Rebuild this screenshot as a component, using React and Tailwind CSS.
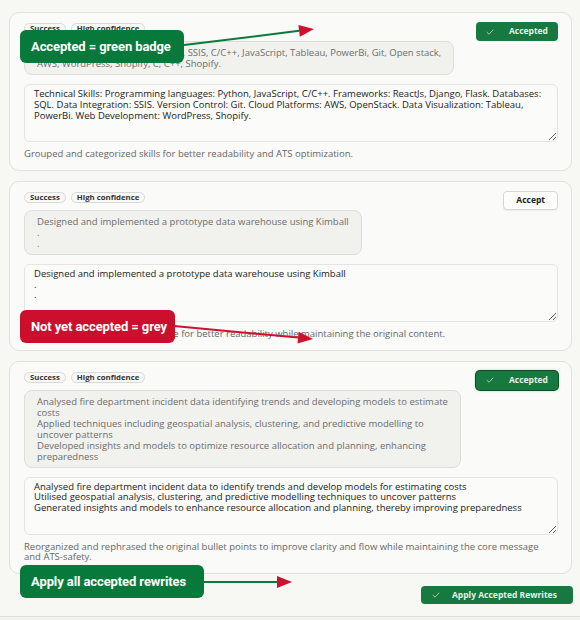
import React from 'react';

const rewrites = [
  {
    id: 'skills',
    accepted: true,
    original:
      'Python, SQL, MySQL, PostgreSQL, SSIS, C/C++, JavaScript, Tableau, PowerBi, Git, Open stack,\nAWS, WordPress, Shopify, C, C++, Shopify.',
    rewritten:
      'Technical Skills: Programming languages: Python, JavaScript, C/C++. Frameworks: ReactJs, Django, Flask. Databases:\nSQL. Data Integration: SSIS. Version Control: Git. Cloud Platforms: AWS, OpenStack. Data Visualization: Tableau,\nPowerBi. Web Development: WordPress, Shopify.',
    note: 'Grouped and categorized skills for better readability and ATS optimization.',
  },
  {
    id: 'warehouse',
    accepted: false,
    original: 'Designed and implemented a prototype data warehouse using Kimball\n.\n.',
    rewritten: 'Designed and implemented a prototype data warehouse using Kimball\n.\n.',
    note: 'Improved formatting and structure for better readability while maintaining the original content.',
  },
  {
    id: 'fire',
    accepted: true,
    focused: true,
    original:
      'Analysed fire department incident data identifying trends and developing models to estimate\ncosts\nApplied techniques including geospatial analysis, clustering, and predictive modelling to\nuncover patterns\nDeveloped insights and models to optimize resource allocation and planning, enhancing\npreparedness',
    rewritten:
      'Analysed fire department incident data to identify trends and develop models for estimating costs\nUtilised geospatial analysis, clustering, and predictive modelling techniques to uncover patterns\nGenerated insights and models to enhance resource allocation and planning, thereby improving preparedness',
    note: 'Reorganized and rephrased the original bullet points to improve clarity and flow while maintaining the core message and ATS-safety.',
  },
];

const Check = ({ className }) => (
  <svg className={className} viewBox="0 0 12 12" fill="none" stroke="currentColor" strokeWidth="1.2" strokeLinecap="round" strokeLinejoin="round">
    <path d="M1.5 6.5l3 2.8L10.5 3" />
  </svg>
);

const Pill = ({ children }) => (
  <span className="inline-flex items-center h-[11px] px-[5px] rounded-full border border-[#d8d8d4] bg-[#f8f8f6] text-[7.8px] leading-[9px] font-bold text-[#333]">
    {children}
  </span>
);

const RewriteCard = ({ item }) => (
  <div className="rounded-[10px] border border-[#e0e0dc] bg-[#fafaf8] pl-[14px] pr-[13px] pt-[9px] pb-[10px]">
    <div className="flex items-start justify-between h-[19px]">
      <div className="flex gap-[5px] mt-[1px]">
        <Pill>Success</Pill>
        <Pill>High confidence</Pill>
      </div>
      {item.accepted ? (
        <button
          className={
            'flex items-center h-[19px] pl-[10px] pr-[10px] rounded-[4px] bg-[#17793f] text-[#e4f1e8] text-[8.5px] font-bold ' +
            (item.focused ? 'ring-1 ring-[#0c4f27] shadow-[0_0_3px_rgba(10,80,40,0.6)]' : '')
          }
        >
          <Check className="w-[8px] h-[8px] mr-[15px] text-[#c9dccf]" />
          Accepted
        </button>
      ) : (
        <button className="flex items-center h-[19px] px-[12px] rounded-[4px] border border-[#d6d6d2] bg-[#fdfdfc] text-[#222] text-[8.5px] font-bold shadow-[0_1px_1px_rgba(0,0,0,0.06)]">
          Accept
        </button>
      )}
    </div>

    <div className="w-fit max-w-[442px] rounded-[8px] border border-[#dcdcd8] bg-[#f1f1ee] px-[12px] py-[5px] text-[9.5px] leading-[11px] text-[#6d6d6d] whitespace-pre-line">
      {item.original}
    </div>

    <textarea
      readOnly
      defaultValue={item.rewritten}
      className="block w-full h-[58px] mt-[9px] resize-y rounded-[6px] border border-[#e4e4e0] bg-[#fbfbf9] px-[9px] py-[4px] text-[9.5px] leading-[10.8px] text-[#222] outline-none"
    />

    <p className="mt-[7px] pr-[16px] text-[9.5px] leading-[10.8px] text-[#666]">{item.note}</p>
  </div>
);

// arrowhead triangle for a line running from (x1,y1) to the tip (x2,y2)
const headPoints = (x1, y1, x2, y2, len = 15, w = 6) => {
  const dx = x2 - x1;
  const dy = y2 - y1;
  const d = Math.hypot(dx, dy);
  const ux = dx / d;
  const uy = dy / d;
  const bx = x2 - ux * len;
  const by = y2 - uy * len;
  return {
    base: [bx, by],
    points: `${x2},${y2} ${bx - uy * w},${by + ux * w} ${bx + uy * w},${by - ux * w}`,
  };
};

const Arrow = ({ from, to, line }) => {
  const { base, points } = headPoints(from[0], from[1], to[0], to[1]);
  return (
    <g>
      <line x1={from[0]} y1={from[1]} x2={base[0]} y2={base[1]} stroke={line} strokeWidth="2" />
      <polygon points={points} fill="#d0102e" />
    </g>
  );
};

const Callout = ({ className, children }) => (
  <div
    className={
      'absolute flex items-center h-[33px] pl-[11px] rounded-[6px] whitespace-nowrap text-white font-bold text-[13px] tracking-[-0.1px] font-["Roboto",sans-serif] ' +
      className
    }
  >
    {children}
  </div>
);

export default function App() {
  return (
    <div className="relative w-full min-h-[620px] overflow-hidden bg-[#f7f7f4] font-['Open_Sans',sans-serif]">
      <div className="flex flex-col gap-[10px] pl-[9px] pr-[8px] pt-[12px]">
        {rewrites.map((r) => (
          <RewriteCard key={r.id} item={r} />
        ))}
      </div>

      <div className="flex justify-end pr-[7px] mt-[12px]">
        <button className="flex items-center h-[18px] w-[152px] pl-[11px] rounded-[4px] bg-[#17793f] text-[#e4f1e8] text-[8.5px] font-bold">
          <Check className="w-[8px] h-[8px] mr-[12px] text-[#c9dccf]" />
          Apply Accepted Rewrites
        </button>
      </div>

      <div className="absolute left-0 right-0 top-[616px] h-[4px] border-t border-[#dededa] bg-[#f2f2ef]" />

      <svg className="absolute inset-0 pointer-events-none" width="580" height="620">
        <Arrow from={[184, 45]} to={[314, 29]} line="#0b7a3c" />
        <Arrow from={[174, 326]} to={[313, 339]} line="#d0102e" />
        <Arrow from={[203, 582]} to={[292, 582]} line="#0b7a3c" />
      </svg>

      <Callout className="left-[20px] top-[30px] w-[164px] bg-[#077a3b]">Accepted = green badge</Callout>
      <Callout className="left-[20px] top-[310px] w-[155px] bg-[#cc0f2c]">Not yet accepted = grey</Callout>
      <Callout className="left-[20px] top-[565px] w-[184px] bg-[#077a3b]">Apply all accepted rewrites</Callout>
    </div>
  );
}
